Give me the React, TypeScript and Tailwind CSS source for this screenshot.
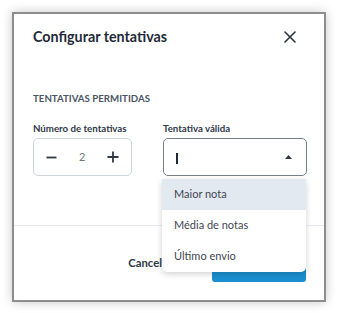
import React from "react";

export default function App() {
  return (
    <div
      className="w-[339px] h-[313px] bg-white p-[12px]"
      style={{ fontFamily: "Lato, 'Noto Sans', sans-serif" }}
    >
      <div className="relative w-[314px] h-[290px] bg-white border-2 border-[#8d8d8d] shadow-[0_0_10px_rgba(0,0,0,0.22)] flex flex-col">
        {/* header */}
        <div className="flex items-center justify-between pl-[19px] pr-[28px] pt-[14px]">
          <h1 className="text-[14.3px] leading-[18px] font-bold text-[#1f2a38]">Configurar tentativas</h1>
          <svg width="12" height="12" viewBox="0 0 12 12">
            <path d="M1 1 L11 11 M11 1 L1 11" stroke="#2a3340" strokeWidth="1.6" strokeLinecap="round" />
          </svg>
        </div>
        {/* body */}
        <div className="pl-[19px] pt-[46px]">
          <div className="text-[9.7px] leading-[12px] font-bold text-[#4a5563]">TENTATIVAS PERMITIDAS</div>
          <div className="flex gap-[31px] mt-[18px]">
            <div className="flex flex-col">
              <label className="text-[9.7px] leading-[12px] font-bold text-[#2e3846]">Número de tentativas</label>
              <div className="mt-[4px] w-[99px] h-[38px] border border-[#cdd5dc] rounded-[5px] flex items-center pl-[12px]">
                <svg width="11" height="11" viewBox="0 0 11 11"><path d="M0.5 5.5 H10.5" stroke="#2e3846" strokeWidth="1.8" /></svg>
                <span className="ml-[22px] text-[11px] leading-[14px] text-[#6e7376]">2</span>
                <svg className="ml-[22px]" width="12" height="12" viewBox="0 0 12 12"><path d="M0.5 6 H11.5 M6 0.5 V11.5" stroke="#2e3846" strokeWidth="1.8" /></svg>
              </div>
            </div>
            <div className="flex flex-col">
              <label className="text-[9.7px] leading-[12px] font-bold text-[#2e3846]">Tentativa válida</label>
              <div className="mt-[4px] w-[144px] h-[38px] border border-[#787f87] rounded-[5px] flex items-center justify-between pl-[12px] pr-[14px]">
                <div className="w-[1.5px] h-[11px] bg-[#1f2a38] mt-[2px]" />
                <svg width="7" height="4" viewBox="0 0 7 4"><path d="M0 4 L3.5 0 L7 4 Z" fill="#2e3846" /></svg>
              </div>
            </div>
          </div>
        </div>
        <div className="mt-auto border-t border-[#e6eaf0]">
          <div className="h-[74px] flex items-center justify-end pr-[18px] gap-[40px]">
            <span className="text-[11.3px] leading-[14px] font-bold text-[#2e3846]">Cancelar</span>
            <div className="w-[94px] h-[37px] rounded-[3px] bg-[#1a8fcf]" />
          </div>
        </div>
        {/* dropdown */}
        <div className="absolute left-[148px] top-[165px] w-[144px] bg-white rounded-b-[5px] shadow-[0_2px_6px_rgba(0,0,0,0.18)] text-[11px] text-[#3f4650]">
          <div className="h-[31px] flex items-center px-[12px] bg-[#e3e9f0]">Maior nota</div>
          <div className="h-[31px] flex items-center px-[12px]">Média de notas</div>
          <div className="h-[31px] flex items-center px-[12px]">Último envio</div>
        </div>
      </div>
    </div>
  );
}
